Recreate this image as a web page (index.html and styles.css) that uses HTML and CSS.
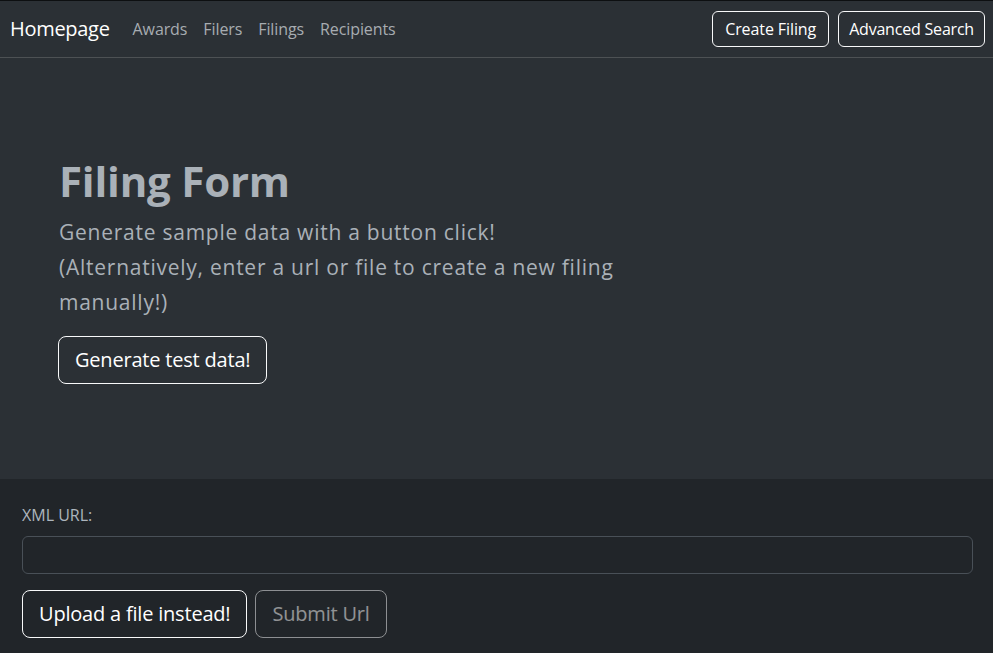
FILE: index.html
```html
<!DOCTYPE html>
<html lang="en">
<head>
<meta charset="utf-8">
<title>Filing Form</title>
<link rel="stylesheet" href="styles.css">
</head>
<body>
<nav class="navbar">
  <div class="nav-left">
    <a class="brand" href="#">Homepage</a>
    <ul class="nav-links">
      <li><a href="#">Awards</a></li>
      <li><a href="#">Filers</a></li>
      <li><a href="#">Filings</a></li>
      <li><a href="#">Recipients</a></li>
    </ul>
  </div>
  <div class="nav-right">
    <button class="btn btn-outline">Create Filing</button>
    <button class="btn btn-outline">Advanced Search</button>
  </div>
</nav>
<section class="hero">
  <h1 class="hero-title">Filing Form</h1>
  <p class="lead">Generate sample data with a button click!<br>(Alternatively, enter a url or file to create a new filing manually!)</p>
  <button class="btn btn-outline btn-lg">Generate test data!</button>
</section>
<section class="form-area">
  <label class="form-label" for="xml-url">XML URL:</label>
  <input class="form-control" id="xml-url" type="text">
  <div class="form-actions">
    <button class="btn btn-outline btn-lg">Upload a file instead!</button>
    <button class="btn btn-outline btn-lg btn-disabled" disabled>Submit Url</button>
  </div>
</section>
</body>
</html>
```
FILE: styles.css
```css
* { box-sizing: border-box; }
html, body { margin: 0; padding: 0; }
body {
  background: #212529;
  color: #dee2e6;
  font-family: "Open Sans", "Noto Sans", sans-serif;
  font-size: 16px;
  line-height: 1.5;
  height: 653px;
  overflow: hidden;
}
a { text-decoration: none; }
.navbar {
  display: flex;
  justify-content: space-between;
  align-items: center;
  height: 58px;
  padding: 0 8px 0 10px;
  background: #2b3035;
  border-top: 1px solid #0d0f11;
  border-bottom: 1px solid #4d5154;
}
.nav-left { display: flex; align-items: center; }
.brand {
  color: #fff;
  font-size: 20px;
  letter-spacing: -0.3px;
  margin-right: 15px;
}
.nav-links {
  display: flex;
  list-style: none;
  margin: 0;
  padding: 0;
}
.nav-links a {
  display: block;
  color: #a7acb1;
  padding: 8px;
  letter-spacing: -0.1px;
}
.nav-right { display: flex; gap: 9px; }
.btn {
  font-family: inherit;
  font-size: 16px;
  line-height: 1.5;
  background: transparent;
  color: #fff;
  border: 1px solid #f8f9fa;
  border-radius: 6px;
  padding: 5px 12px;
  cursor: pointer;
}
.nav-right .btn { padding: 5px 12px; letter-spacing: -0.1px; }
.nav-right .btn:last-child { padding: 5px 10px; letter-spacing: -0.2px; }
.btn-lg {
  font-size: 20px;
  padding: 8px 16px;
  border-radius: 8px;
  letter-spacing: -0.2px;
}
.btn-disabled {
  opacity: 0.5;
  cursor: default;
}
.hero {
  background: #2b3035;
  height: 421px;
  padding: 98px 58px 0 58px;
}
.hero-title {
  margin: 0 0 9px 1px;
  font-size: 42px;
  font-weight: 700;
  line-height: 1.2;
  color: #aab1b8;
  letter-spacing: -0.2px;
}
.lead {
  margin: 0 0 16px 1px;
  max-width: 600px;
  font-size: 21px;
  font-weight: 400;
  line-height: 35px;
  letter-spacing: 0.75px;
  color: #aab1b8;
}
.form-area {
  padding: 24px 20px 0 22px;
}
.form-label {
  display: block;
  color: #adb5bd;
  margin-bottom: 9px;
}
.form-control {
  display: block;
  width: 100%;
  height: 38px;
  background: #212529;
  border: 1px solid #495057;
  border-radius: 6px;
  color: #dee2e6;
  font-family: inherit;
  font-size: 16px;
  padding: 6px 12px;
}
.form-actions {
  display: flex;
  gap: 8px;
  margin-top: 16px;
}
```
